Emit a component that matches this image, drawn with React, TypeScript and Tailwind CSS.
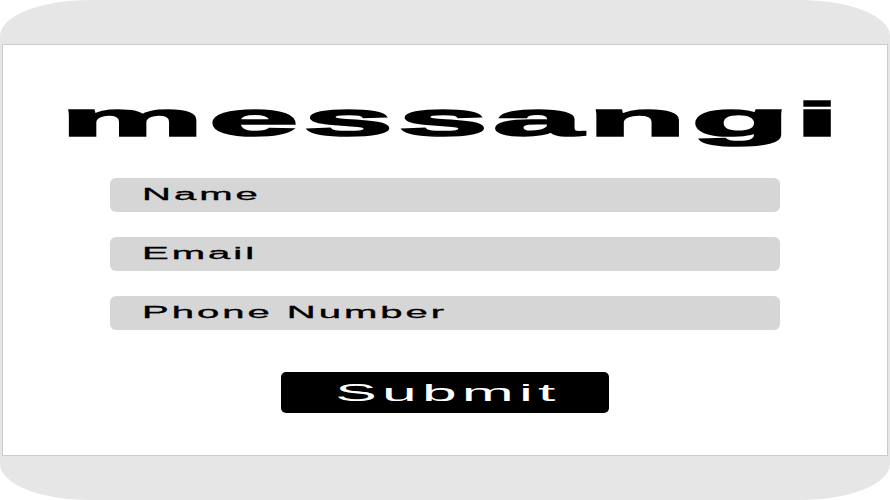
const FIELDS = ["Name", "Email", "Phone Number"]

function Field({ label }: { label: string }) {
  return (
    <div className="flex h-[34px] w-[670px] items-center rounded-md bg-[#d6d6d6] pl-[32px]">
      <span className="inline-block origin-left scale-x-[2.5] text-[16px] leading-none tracking-[1.2px] text-black [-webkit-text-stroke:0.3px_black]">
        {label}
      </span>
    </div>
  )
}

export default function App() {
  return (
    <div className="h-[500px] w-[890px] bg-white font-['Liberation_Sans',Arial,sans-serif]">
      <div className="flex h-full w-full flex-col rounded-[90px/36px] bg-[#e6e6e6]">
        <div className="h-[44px] shrink-0" />
        <div className="mx-[2px] flex h-[412px] flex-col items-center border border-[#cbcbcb] bg-white pt-[51px]">
          <div className="flex h-[48px] w-full justify-center">
            <span className="inline-block origin-center scale-x-[3.36] pl-[4.5px] text-[48px] font-bold leading-[48px] tracking-[1.5px] text-black [-webkit-text-stroke:1.6px_black]">
              messangi
            </span>
          </div>

          <div className="mt-[34px] flex flex-col gap-[25px]">
            {FIELDS.map((f) => (
              <Field key={f} label={f} />
            ))}
          </div>

          <button className="mt-[42px] flex h-[41px] w-[328px] items-center justify-center rounded-[5px] bg-black">
            <span className="inline-block origin-center scale-x-[2.6] pl-[2px] text-[24px] leading-none tracking-[2px] text-white">
              Submit
            </span>
          </button>
        </div>
      </div>
    </div>
  )
}
